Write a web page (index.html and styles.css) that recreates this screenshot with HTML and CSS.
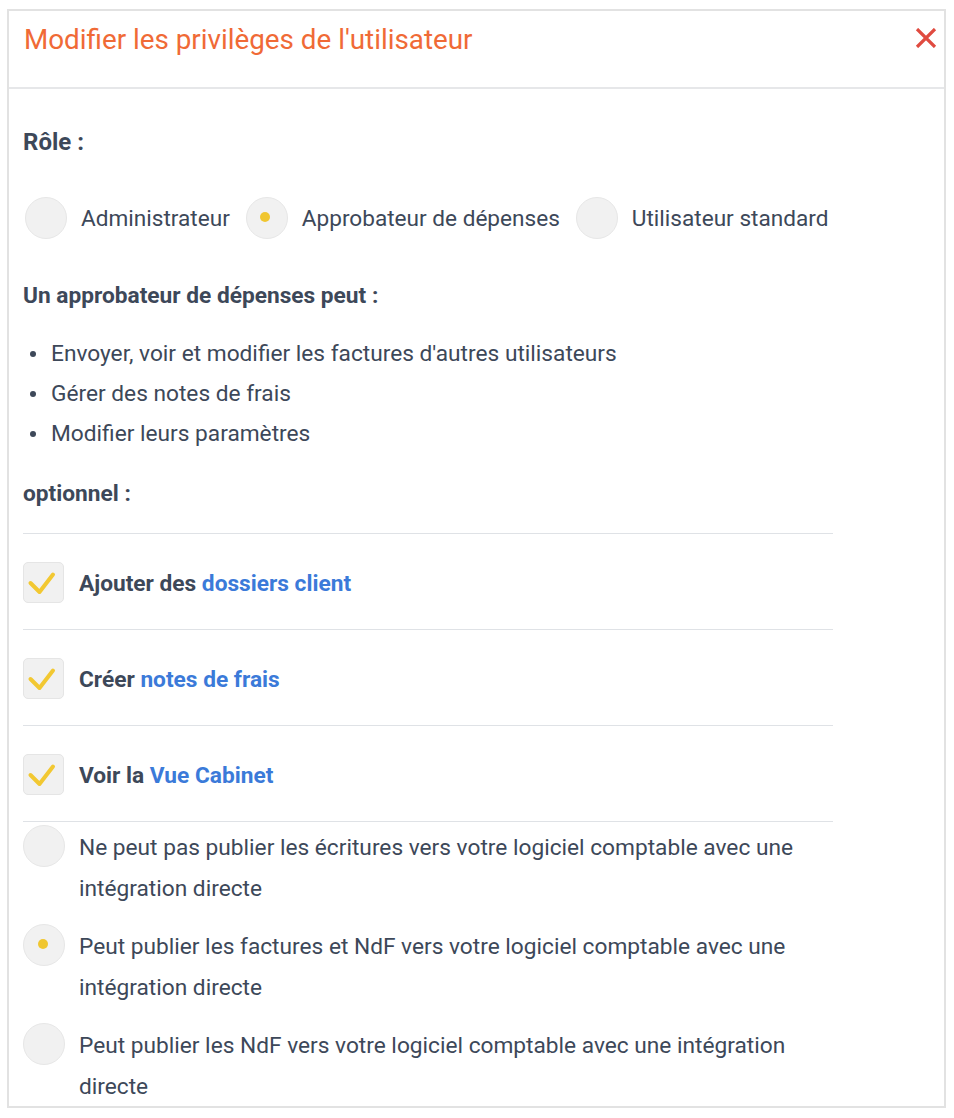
FILE: index.html
```html
<!DOCTYPE html>
<html lang="fr">
<head>
<meta charset="utf-8">
<title>Modifier les privilèges de l'utilisateur</title>
<link rel="stylesheet" href="styles.css">
</head>
<body>
<div class="modal">
  <div class="modal-header">
    <h1 class="modal-title">Modifier les privilèges de l'utilisateur</h1>
    <button class="close" aria-label="Fermer">
      <svg width="22" height="20" viewBox="0 0 22 20"><path d="M2 1 L20 19 M20 1 L2 19" stroke="#e04b40" stroke-width="3.2" stroke-linecap="butt" fill="none"/></svg>
    </button>
  </div>
  <div class="modal-body">
    <div class="section-title">Rôle :</div>
    <div class="role-row">
      <label class="radio"><span class="radio-circle"></span><span class="radio-label">Administrateur</span></label>
      <label class="radio"><span class="radio-circle checked"></span><span class="radio-label">Approbateur de dépenses</span></label>
      <label class="radio"><span class="radio-circle"></span><span class="radio-label">Utilisateur standard</span></label>
    </div>
    <div class="sub-title">Un approbateur de dépenses peut :</div>
    <ul class="bullets">
      <li>Envoyer, voir et modifier les factures d'autres utilisateurs</li>
      <li>Gérer des notes de frais</li>
      <li>Modifier leurs paramètres</li>
    </ul>
    <div class="optional-title">optionnel :</div>
    <div class="options">
      <div class="check-row">
        <span class="checkbox"><svg width="41" height="41" viewBox="0 0 41 41"><path d="M7.5 21 L16.5 30 L30 12.5" stroke="#f2c832" stroke-width="4" fill="none" stroke-linecap="round" stroke-linejoin="round"/></svg></span>
        <span class="check-label">Ajouter des <span class="link">dossiers client</span></span>
      </div>
      <div class="check-row">
        <span class="checkbox"><svg width="41" height="41" viewBox="0 0 41 41"><path d="M7.5 21 L16.5 30 L30 12.5" stroke="#f2c832" stroke-width="4" fill="none" stroke-linecap="round" stroke-linejoin="round"/></svg></span>
        <span class="check-label">Créer <span class="link">notes de frais</span></span>
      </div>
      <div class="check-row">
        <span class="checkbox"><svg width="41" height="41" viewBox="0 0 41 41"><path d="M7.5 21 L16.5 30 L30 12.5" stroke="#f2c832" stroke-width="4" fill="none" stroke-linecap="round" stroke-linejoin="round"/></svg></span>
        <span class="check-label">Voir la <span class="link">Vue Cabinet</span></span>
      </div>
    </div>
    <div class="publish-list">
      <label class="publish">
        <span class="radio-circle"></span>
        <span class="publish-text">Ne peut pas publier les écritures vers votre logiciel comptable avec une intégration directe</span>
      </label>
      <label class="publish">
        <span class="radio-circle checked"></span>
        <span class="publish-text">Peut publier les factures et NdF vers votre logiciel comptable avec une intégration directe</span>
      </label>
      <label class="publish">
        <span class="radio-circle"></span>
        <span class="publish-text">Peut publier les NdF vers votre logiciel comptable avec une intégration directe</span>
      </label>
    </div>
  </div>
</div>
</body>
</html>
```
FILE: styles.css
```css
html, body {
  margin: 0;
  padding: 0;
  background: #ffffff;
}
body {
  padding: 9px 8px 0 7px;
  font-family: Roboto, "Liberation Sans", Arial, sans-serif;
  color: #3d4859;
}
.modal {
  width: 939px;
  height: 1099px;
  box-sizing: border-box;
  border: 2px solid #e2e2e2;
  overflow: hidden;
  background: #fff;
}
.modal-header {
  border-bottom: 2px solid #e6e7e9;
  display: flex;
  align-items: flex-start;
  justify-content: space-between;
  padding: 14px 7px 0 15px;
  height: 62px;
}
.modal-title {
  margin: 0;
  font-size: 27.8px;
  line-height: 30px;
  font-weight: 400;
  color: #f06a36;
}
.close {
  border: 0;
  background: none;
  padding: 0;
  margin-top: 3px;
  width: 22px;
  height: 20px;
  display: block;
}
.close svg { display: block; }
.modal-body {
  padding: 33px 0 0 14px;
  width: 810px;
}
.section-title {
  font-size: 24px;
  line-height: 39px;
  font-weight: 700;
  padding-top: 1px;
}
.role-row {
  margin-top: 35px;
  display: flex;
  align-items: center;
  gap: 16px;
  padding-left: 2px;
}
.radio {
  display: flex;
  align-items: center;
  gap: 14px;
}
.radio-label {
  font-size: 22.6px;
  line-height: 40px;
  padding-top: 2px;
}
.radio-circle {
  width: 42px;
  height: 42px;
  box-sizing: border-box;
  border-radius: 50%;
  background: #f1f1f1;
  border: 1px solid #e7e7e7;
  flex: none;
  display: flex;
  align-items: center;
  justify-content: center;
}
.radio-circle.checked::after {
  content: "";
  width: 10px;
  height: 10px;
  border-radius: 50%;
  background: #f0c630;
  margin-left: -3px;
  margin-top: -2px;
}
.sub-title {
  margin-top: 37px;
  font-size: 22.7px;
  line-height: 40px;
  font-weight: 700;
}
.bullets {
  margin: 18px 0 0 0;
  padding: 0;
  list-style: none;
}
.bullets li {
  font-size: 22.7px;
  line-height: 40px;
  display: flex;
  align-items: center;
}
.bullets li::before {
  content: "";
  width: 6px;
  height: 6px;
  border-radius: 50%;
  background: #3d4859;
  margin: 0 15px 0 7px;
  flex: none;
}
.optional-title {
  margin-top: 20px;
  font-size: 22.7px;
  line-height: 40px;
  font-weight: 700;
}
.options {
  margin-top: 19px;
  border-top: 1px solid #dfe2e6;
}
.check-row {
  height: 95px;
  border-bottom: 1px solid #dfe2e6;
  display: flex;
  align-items: center;
  gap: 15px;
}
.checkbox {
  width: 41px;
  height: 41px;
  box-sizing: border-box;
  border-radius: 5px;
  background: #f1f1f1;
  border: 1px solid #e5e5e5;
  flex: none;
  position: relative;
  margin-top: 1px;
}
.checkbox svg {
  position: absolute;
  left: -1px;
  top: -1px;
}
.check-label {
  font-size: 22.7px;
  font-weight: 700;
  line-height: 30px;
  padding-top: 4px;
}
.link {
  color: #3b7ad9;
}
.publish-list {
  margin-top: 3px;
  display: flex;
  flex-direction: column;
  gap: 15px;
}
.publish {
  display: flex;
  align-items: flex-start;
  gap: 14px;
}
.publish-text {
  font-size: 22.7px;
  line-height: 41px;
  padding-top: 2px;
}
```
